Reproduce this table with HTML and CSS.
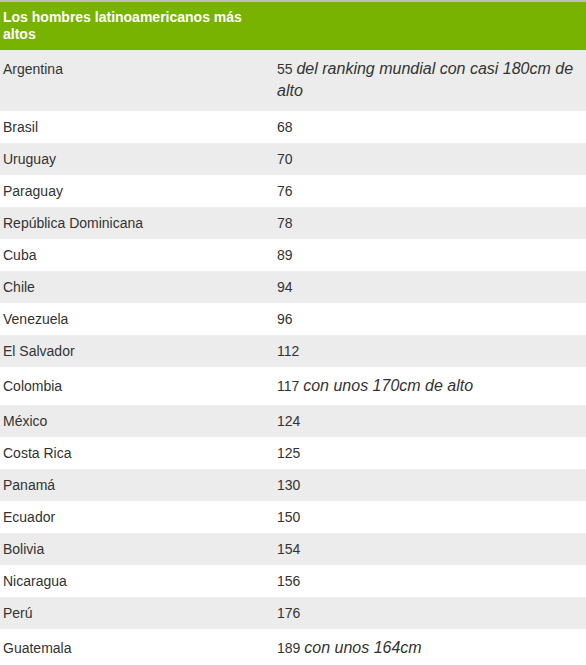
FILE: index.html
```html
<!DOCTYPE html>
<html lang="es">
<head>
<meta charset="utf-8">
<link rel="stylesheet" href="styles.css">
</head>
<body>
<div class="topline"></div>
<table class="tbl">
  <thead>
    <tr><th class="c1">Los hombres latinoamericanos más altos</th><th></th></tr>
  </thead>
  <tbody>
    <tr class="tall"><td>Argentina</td><td>55 <em>del ranking mundial con casi 180cm de alto</em></td></tr>
    <tr><td>Brasil</td><td>68</td></tr>
    <tr><td>Uruguay</td><td>70</td></tr>
    <tr><td>Paraguay</td><td>76</td></tr>
    <tr><td>República Dominicana</td><td>78</td></tr>
    <tr><td>Cuba</td><td>89</td></tr>
    <tr><td>Chile</td><td>94</td></tr>
    <tr><td>Venezuela</td><td>96</td></tr>
    <tr><td>El Salvador</td><td>112</td></tr>
    <tr><td>Colombia</td><td>117 <em>con unos 170cm de alto</em></td></tr>
    <tr><td>México</td><td>124</td></tr>
    <tr><td>Costa Rica</td><td>125</td></tr>
    <tr><td>Panamá</td><td>130</td></tr>
    <tr><td>Ecuador</td><td>150</td></tr>
    <tr><td>Bolivia</td><td>154</td></tr>
    <tr><td>Nicaragua</td><td>156</td></tr>
    <tr><td>Perú</td><td>176</td></tr>
    <tr><td>Guatemala</td><td>189 <em>con unos 164cm</em></td></tr>
  </tbody>
</table>
</body>
</html>
```
FILE: styles.css
```css
html, body {
  margin: 0;
  padding: 0;
  background: #ffffff;
}
body {
  font-family: "Liberation Sans", Arial, sans-serif;
  font-size: 14px;
  color: #333333;
}
.topline {
  height: 2px;
  background: #bdbdbd;
}
.tbl {
  width: 586px;
  border-collapse: collapse;
  border-spacing: 0;
}
.tbl th {
  background: #77b300;
  color: #ffffff;
  font-weight: bold;
  text-align: left;
  vertical-align: top;
  padding: 7px 3px 7px 3px;
  line-height: 17px;
}
.tbl th.c1 {
  width: 267px;
  padding-right: 4px;
}
.tbl td {
  padding: 8px 3px 8px 3px;
  vertical-align: baseline;
  line-height: 16px;
}
.tbl td:first-child {
  width: 267px;
  padding-right: 4px;
}
.tbl tr.tall td {
  padding-bottom: 9px;
}
.tbl tbody tr:nth-child(odd) td {
  background: #ececec;
}
.tbl em {
  font-size: 16px;
  line-height: 22px;
}
```
